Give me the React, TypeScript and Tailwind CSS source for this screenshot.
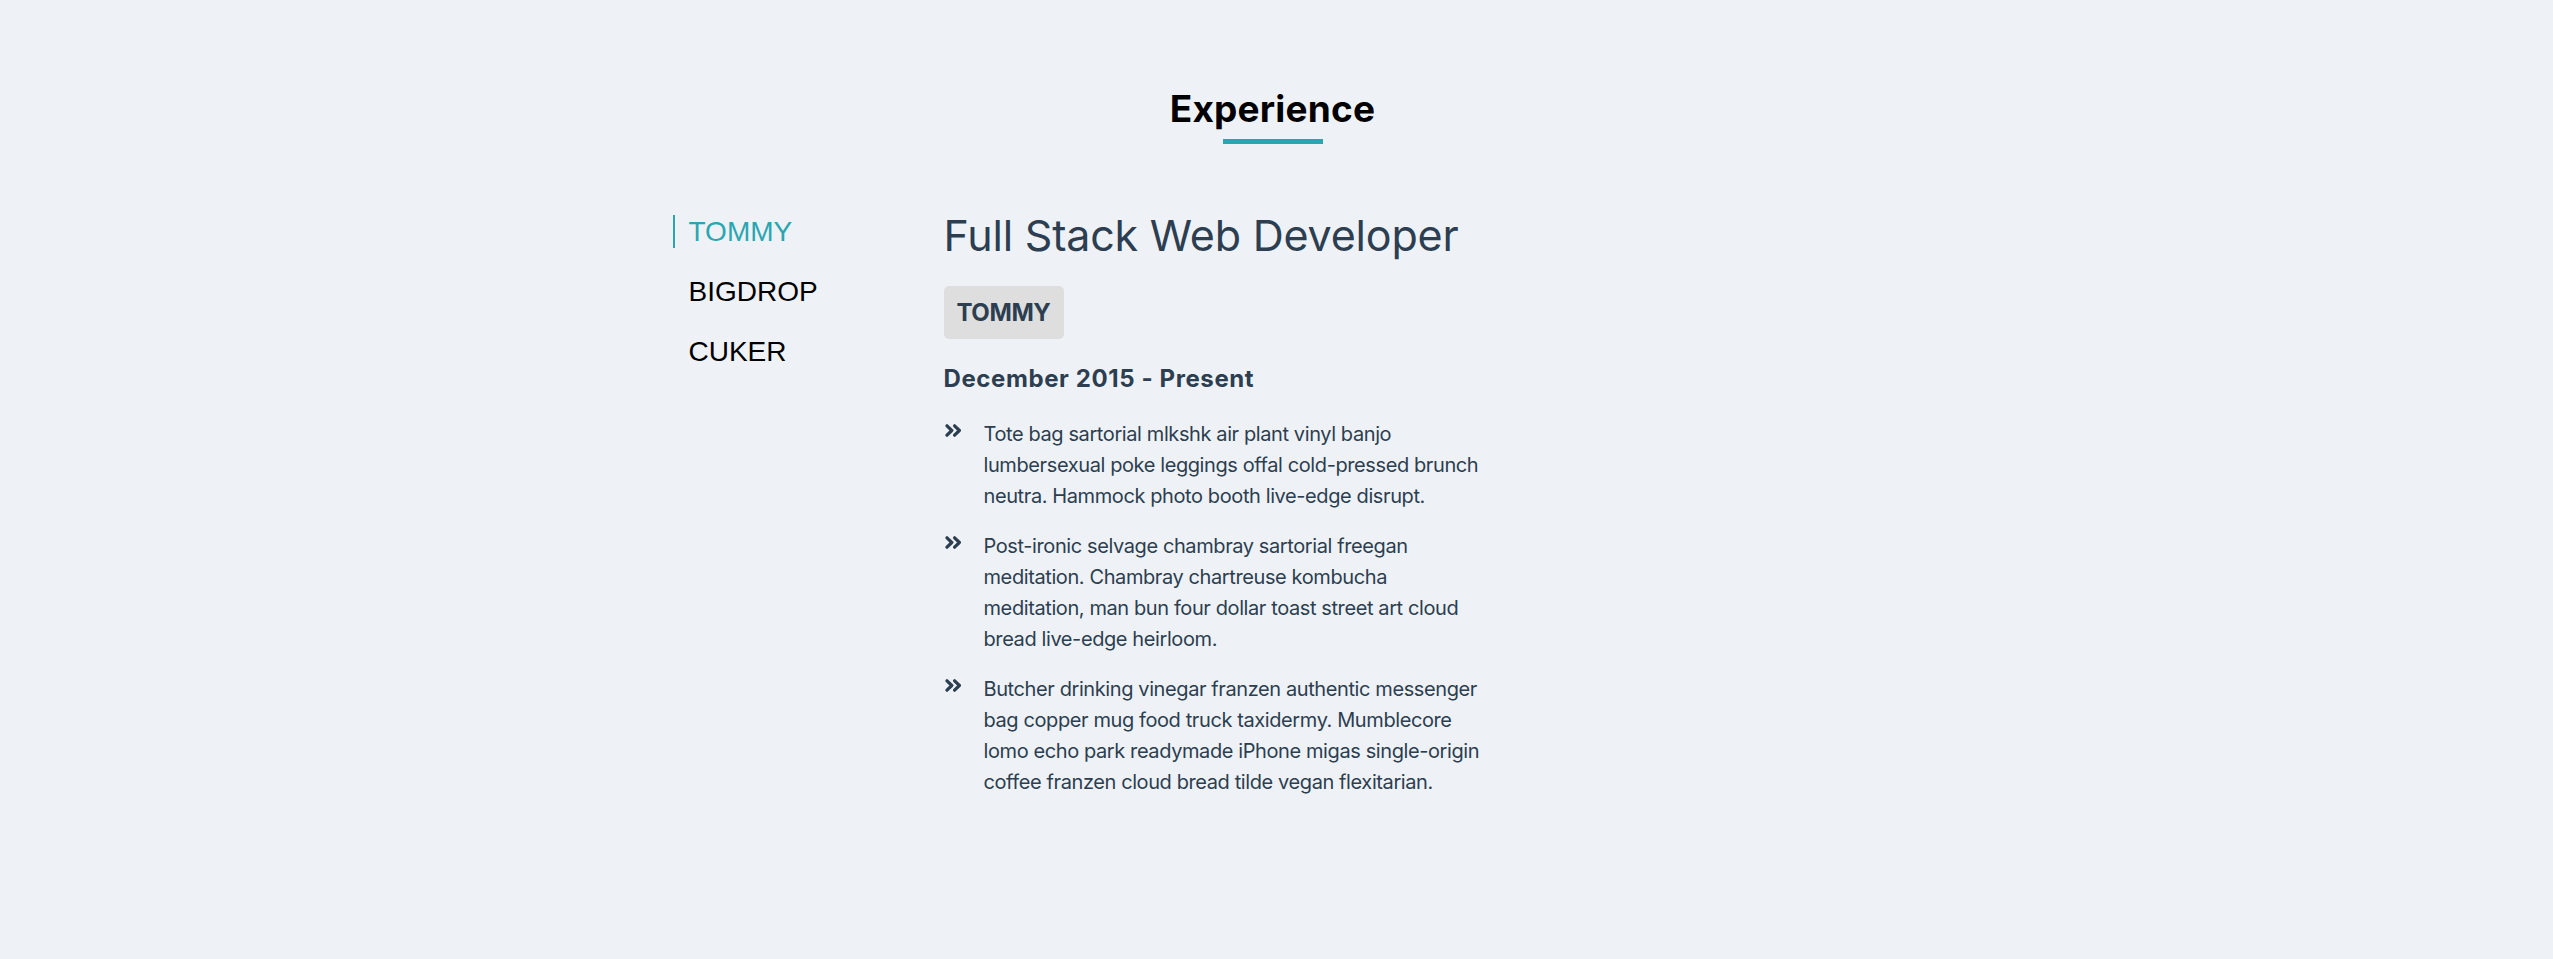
const companies = ["TOMMY", "BIGDROP", "CUKER"];

const bullets = [
  "Tote bag sartorial mlkshk air plant vinyl banjo lumbersexual poke leggings offal cold-pressed brunch neutra. Hammock photo booth live-edge disrupt.",
  "Post-ironic selvage chambray sartorial freegan meditation. Chambray chartreuse kombucha meditation, man bun four dollar toast street art cloud bread live-edge heirloom.",
  "Butcher drinking vinegar franzen authentic messenger bag copper mug food truck taxidermy. Mumblecore lomo echo park readymade iPhone migas single-origin coffee franzen cloud bread tilde vegan flexitarian.",
];

const DoubleAngle = () => (
  <svg width="18" height="13" viewBox="0 0 18 13" className="shrink-0">
    <path
      d="M2 1.8 L6.8 6.5 L2 11.2 M9.6 1.8 L14.4 6.5 L9.6 11.2"
      fill="none"
      stroke="#2c3e50"
      strokeWidth="3.2"
      strokeLinecap="round"
      strokeLinejoin="round"
    />
  </svg>
);

const App = () => {
  return (
    <div className="min-h-[959px] w-full bg-[#eef2f6] pt-[86px] font-['Inter',sans-serif] text-[#2c3e50]">
      {/* section heading */}
      <div className="flex flex-col items-center pr-[8px]">
        <h1 className="text-[37px] leading-[46px] font-bold tracking-[0.2px] text-black">
          Experience
        </h1>
        <div className="mt-[7px] h-[5px] w-[100px] bg-[#2aa6b2]"></div>
      </div>

      <div className="mx-auto mt-[65px] flex w-[1208px] items-start">
        {/* tabs */}
        <ul className="flex w-[271px] flex-col gap-[27px] pt-[6px] font-['Liberation_Sans',Arial,sans-serif] text-[28px] leading-[33px]">
          {companies.map((c, i) => (
            <li
              key={c}
              className={
                i === 0
                  ? "border-l-2 border-[#2aa6b2] pl-[14px] text-[#2aa6b2]"
                  : "border-l-2 border-transparent pl-[14px] text-black"
              }
            >
              {c}
            </li>
          ))}
        </ul>

        {/* panel */}
        <div className="flex w-[545px] flex-col items-start">
          <h2 className="text-[43px] leading-[53px] font-normal tracking-[-0.2px]">
            Full Stack Web Developer
          </h2>
          <span className="mt-[24px] rounded-[5px] bg-[#dedede] px-[13px] py-3 text-[24px] leading-[29px] font-bold tracking-[-0.4px]">
            TOMMY
          </span>
          <h3 className="mt-[25px] text-[24px] leading-[29px] font-bold tracking-[0.6px]">
            December 2015 - Present
          </h3>
          <ul className="mt-[26px] flex flex-col gap-[19px]">
            {bullets.map((b, i) => (
              <li key={i} className="flex items-start">
                <div className="flex w-[40px] shrink-0 pt-[5px] pl-[1px]">
                  <DoubleAngle />
                </div>
                <p className="w-[505px] text-[20px] leading-[31px] tracking-[-0.4px]">
                  {b}
                </p>
              </li>
            ))}
          </ul>
        </div>
      </div>
    </div>
  );
};

export default App;
